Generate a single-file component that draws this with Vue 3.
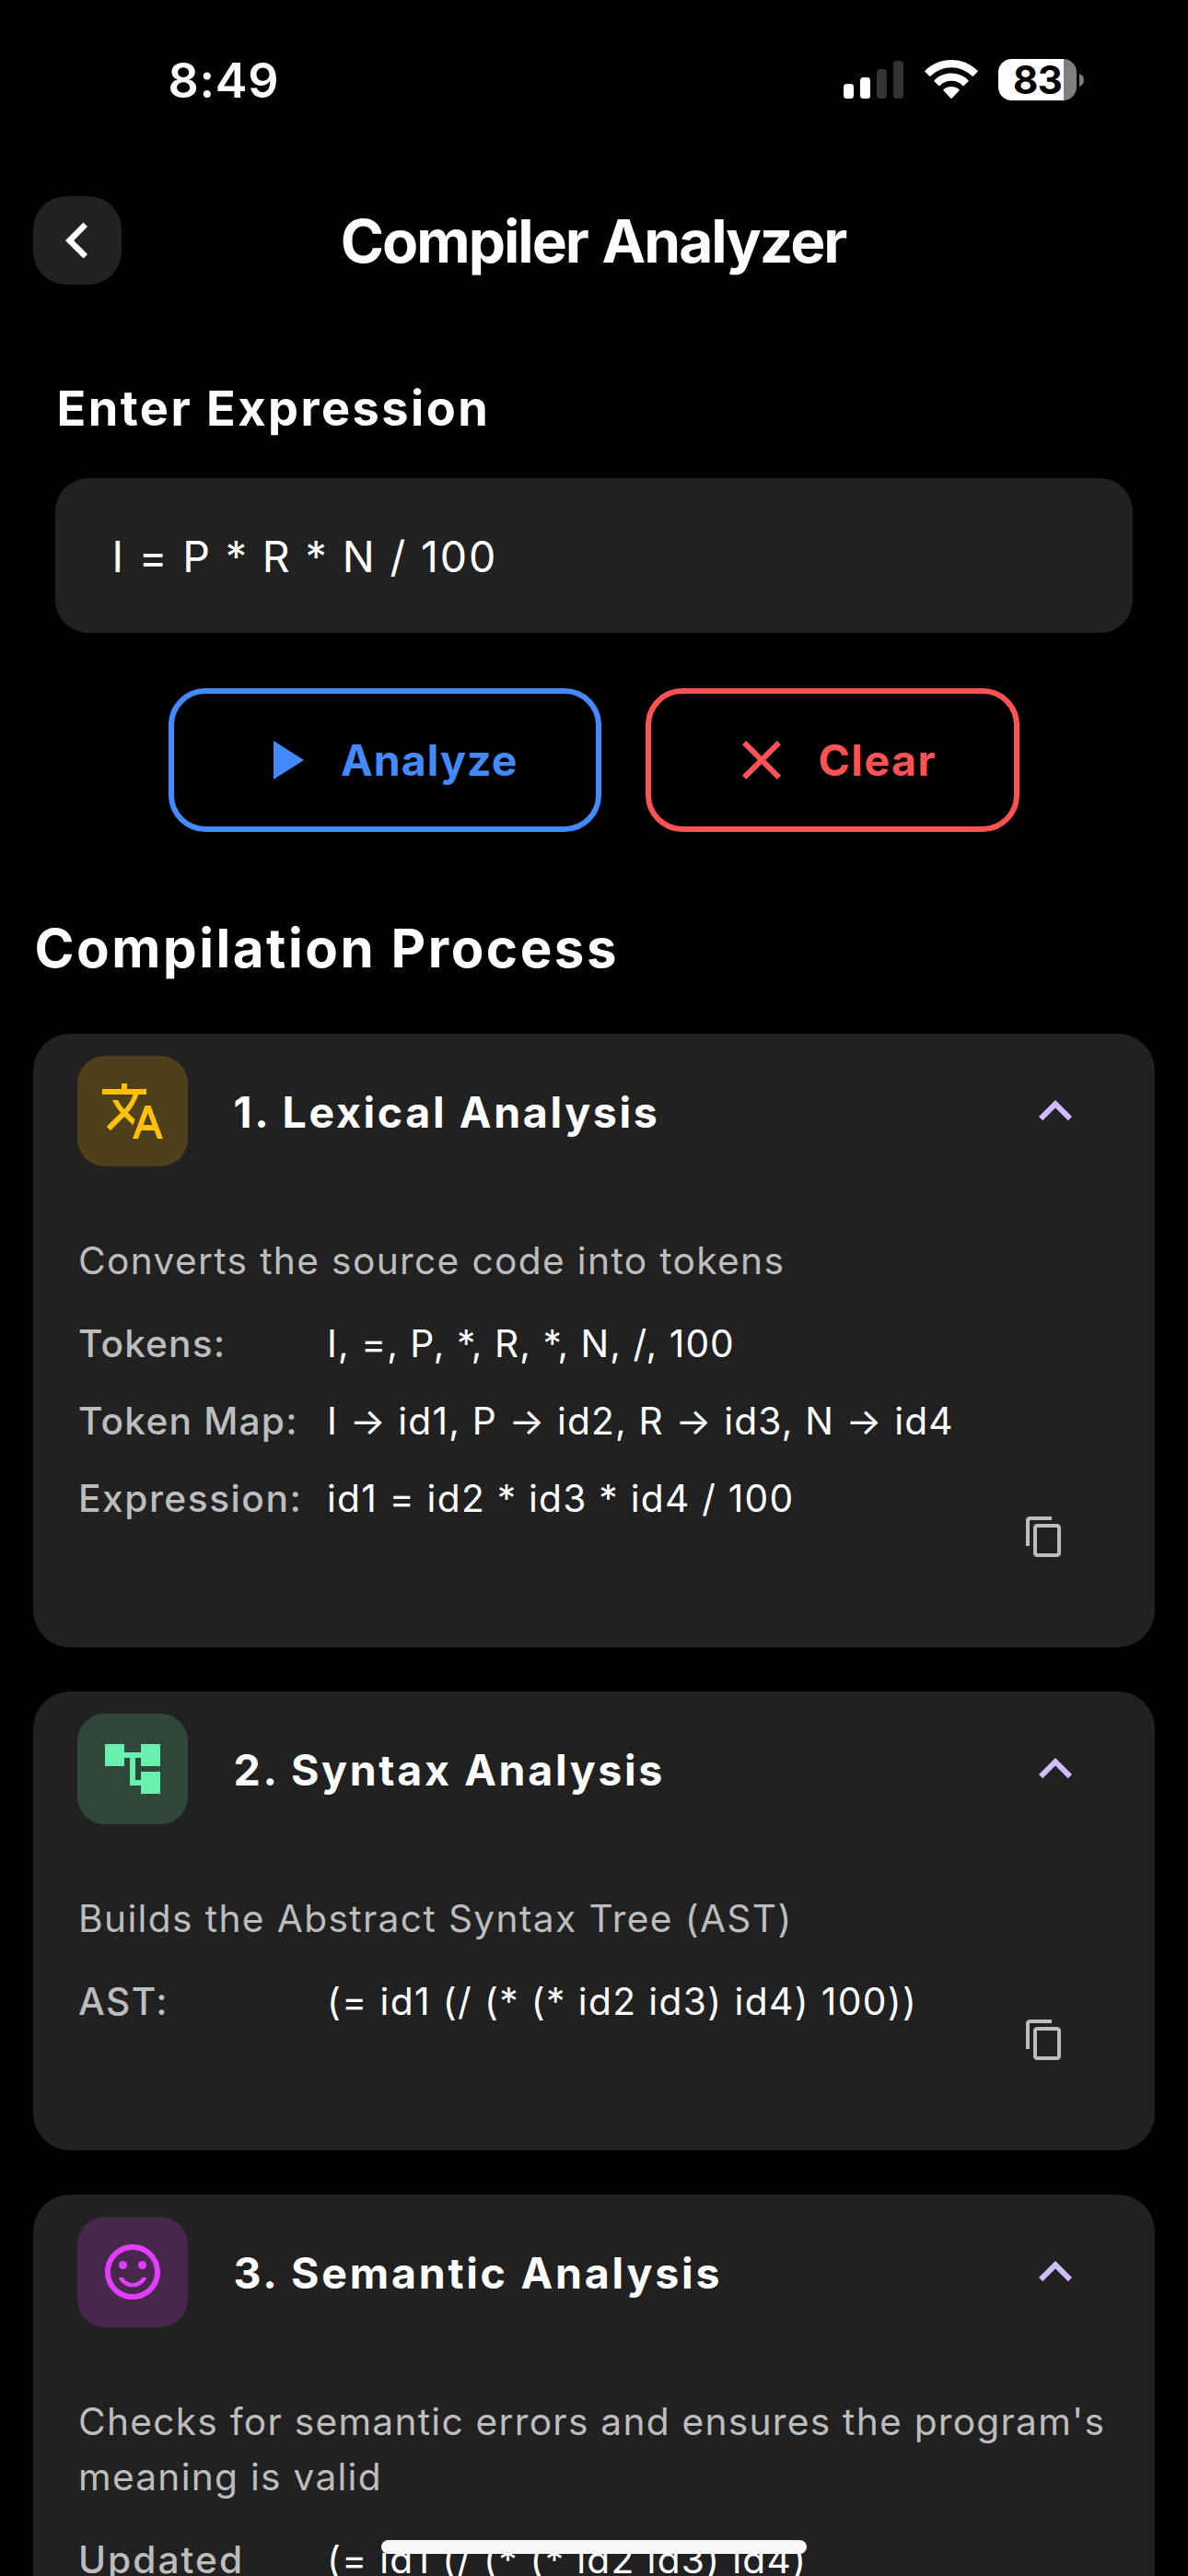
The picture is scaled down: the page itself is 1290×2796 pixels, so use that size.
<script setup>
import { ref } from 'vue'

const expression = ref('I = P * R * N / 100')

const phases = ref([
  {
    key: 'lexical',
    title: '1. Lexical Analysis',
    titleTracking: 2.65,
    description: 'Converts the source code into tokens',
    tracking: 1.34,
    rows: [
      { label: 'Tokens:', labelTracking: 1.1, value: 'I, =, P, *, R, *, N, /, 100', tracking: 1.03 },
      { label: 'Token Map:', labelTracking: 1.2, value: 'I → id1, P → id2, R → id3, N → id4', tracking: 1.17 },
      { label: 'Expression:', labelTracking: 1.51, value: 'id1 = id2 * id3 * id4 / 100', tracking: 1.25 },
    ],
  },
  {
    key: 'syntax',
    title: '2. Syntax Analysis',
    titleTracking: 2.67,
    description: 'Builds the Abstract Syntax Tree (AST)',
    tracking: 1.36,
    rows: [
      { label: 'AST:', labelTracking: 1.41, value: '(= id1 (/ (* (* id2 id3) id4) 100))', tracking: 1.4 },
    ],
  },
  {
    key: 'semantic',
    title: '3. Semantic Analysis',
    titleTracking: 2.78,
    description: "Checks for semantic errors and ensures the program's meaning is valid",
    tracking: 1.25,
    rows: [
      { label: 'Updated', labelTracking: 2, value: '(= id1 (/ (* (* id2 id3) id4)', tracking: 1.31 },
    ],
  },
])

const px = (n) => ({ letterSpacing: n + 'px' })
</script>

<template>
  <div class="screen">
    <div class="status">
      <span class="time">8:49</span>
      <div class="indicators">
        <svg class="cell" width="65" height="45" viewBox="0 0 65 45">
          <rect x="0" y="27" width="11" height="16" rx="3.5" fill="#fff" />
          <rect x="18" y="20" width="11" height="23" rx="3.5" fill="#fff" />
          <rect x="36" y="11" width="11" height="32" rx="3.5" fill="#333" />
          <rect x="54" y="2" width="11" height="41" rx="3.5" fill="#333" />
        </svg>
        <svg class="wifi" width="58" height="45" viewBox="0 0 58 45">
          <g fill="#fff">
            <path d="M29 1C17.900 1 7.900 5.400 0.700 12.500Q-0.100 13.300 0.700 14.100L5 18.400Q5.800 19.200 6.600 18.400A32 32 0 0 1 51.400 18.400Q52.200 19.200 53 18.400L57.300 14.100Q58.100 13.300 57.300 12.500C50.100 5.400 40.100 1 29 1Z" />
            <path d="M29 15.600C21.800 15.600 15.400 18.400 10.700 23Q9.900 23.800 10.700 24.600L15 28.800Q15.800 29.600 16.600 28.900A17.800 17.800 0 0 1 41.400 28.900Q42.200 29.600 43 28.800L47.300 24.600Q48.100 23.800 47.300 23C42.600 18.400 36.200 15.600 29 15.600Z" />
            <path d="M29 29.900C25.700 29.900 22.800 31.100 20.600 33Q19.800 33.800 20.600 34.600L28.200 42.400Q29 43.200 29.800 42.400L37.400 34.600Q38.200 33.800 37.400 33C35.200 31.100 32.300 29.900 29 29.900Z" />
          </g>
        </svg>
        <div class="battery">
          <div class="battery-body"><span class="level">83</span></div>
          <svg width="5" height="14" viewBox="0 0 5 14"><path d="M0 0Q5 2 5 7T0 14Z" fill="#808080" /></svg>
        </div>
      </div>
    </div>

    <header class="topbar">
      <button class="back" aria-label="Back">
        <svg width="96" height="96" viewBox="0 0 96 96"><path d="M35 48 54.500 28.600 59 33.100 44.100 48 59 62.900 54.500 67.400Z" fill="#fff" /></svg>
      </button>
      <h1>Compiler Analyzer</h1>
    </header>

    <h2 class="label">Enter Expression</h2>
    <div class="field"><span>{{ expression }}</span></div>

    <div class="actions">
      <button class="action analyze">
        <svg width="72" height="72" viewBox="0 0 24 24"><path d="M8 5v14l11-7z" /></svg>
        <span>Analyze</span>
      </button>
      <button class="action clear">
        <svg width="72" height="72" viewBox="0 0 24 24"><path d="M19 6.410 17.590 5 12 10.590 6.410 5 5 6.410 10.590 12 5 17.590 6.410 19 12 13.410 17.590 19 19 17.590 13.410 12z" /></svg>
        <span>Clear</span>
      </button>
    </div>

    <h2 class="section">Compilation Process</h2>

    <div class="cards">
      <section v-for="p in phases" :key="p.key" class="card">
        <div class="card-head">
          <div class="tile" :class="p.key">
            <svg width="72" height="72" viewBox="0 0 24 24">
              <path v-if="p.key === 'lexical'" d="M12.870 15.070l-2.540-2.510.03-.03c1.740-1.940 2.980-4.170 3.710-6.530H17V4h-7V2H8v2H1v1.990h11.170C11.500 7.920 10.440 9.750 9 11.350 8.070 10.320 7.300 9.190 6.690 8h-2c.73 1.630 1.730 3.170 2.980 4.560l-5.090 5.020L4 19l5-5 3.110 3.110.76-2.040zM18.500 10h-2L12 22h2l1.120-3h4.750L21 22h2l-4.500-12zm-2.620 7l1.620-4.330L19.120 17h-3.240z" />
              <path v-else-if="p.key === 'syntax'" d="M22 11V3h-7v3H9V3H2v8h7V8h2v10h4v3h7v-8h-7v3h-2V8h2v3z" />
              <g v-else>
                <circle cx="15.500" cy="9.500" r="1.500" />
                <circle cx="8.500" cy="9.500" r="1.500" />
                <path d="M11.990 2C6.470 2 2 6.480 2 12s4.470 10 9.990 10C17.520 22 22 17.520 22 12S17.520 2 11.990 2zM12 20c-4.420 0-8-3.580-8-8s3.580-8 8-8 8 3.580 8 8-3.580 8-8 8zm0-4c-1.480 0-2.750-.81-3.450-2H6.880c.8 2.050 2.790 3.500 5.120 3.500s4.320-1.450 5.120-3.500h-1.670c-.7 1.190-1.970 2-3.450 2z" />
              </g>
            </svg>
          </div>
          <h3 :style="px(p.titleTracking)">{{ p.title }}</h3>
          <svg class="chevron" width="72" height="72" viewBox="0 0 24 24"><path d="M12 8l-6 6 1.410 1.410L12 10.830l4.590 4.580L18 14z" /></svg>
        </div>
        <p class="desc" :style="px(p.tracking)">{{ p.description }}</p>
        <dl>
          <div v-for="r in p.rows" :key="r.label" class="row">
            <dt :style="px(r.labelTracking)">{{ r.label }}</dt>
            <dd :style="px(r.tracking)">{{ r.value }}</dd>
          </div>
        </dl>
        <button class="copy" aria-label="Copy">
          <svg width="48" height="48" viewBox="0 0 24 24"><path d="M16 1H4c-1.100 0-2 .9-2 2v14h2V3h12V1zm3 4H8c-1.100 0-2 .9-2 2v14c0 1.100.9 2 2 2h11c1.100 0 2-.9 2-2V7c0-1.100-.9-2-2-2zm0 16H8V7h11v14z" /></svg>
        </button>
      </section>
    </div>

    <div class="home-indicator"></div>
  </div>
</template>

<style>
body {
  background: #000;
}
</style>

<style scoped>
.screen {
  position: relative;
  box-sizing: border-box;
  width: 1290px;
  height: 2796px;
  overflow: hidden;
  background: #000;
  color: #fff;
  font-family: Inter, "Liberation Sans", sans-serif;
}
h1, h2, h3, p, dl, dt, dd {
  margin: 0;
}
button {
  margin: 0;
  padding: 0;
  border: 0;
  background: none;
  color: inherit;
  font-family: inherit;
}
svg {
  display: block;
  flex: none;
}

.status {
  box-sizing: border-box;
  display: flex;
  align-items: center;
  justify-content: space-between;
  height: 173px;
  padding: 0 113px 0 182.500px;
}
.time {
  padding-top: 2px;
  font-size: 52px;
  font-weight: 600;
  line-height: 60px;
  letter-spacing: 0.72px;
}
.indicators {
  display: flex;
  align-items: center;
}
.wifi {
  margin-left: 22.500px;
}
.battery {
  display: flex;
  align-items: center;
  gap: 3px;
  margin-left: 22.500px;
}
.battery-body {
  display: flex;
  box-sizing: border-box;
  width: 85px;
  height: 45px;
  padding-left: 16px;
  border-radius: 14.500px;
  background: linear-gradient(90deg, #fff 71px, #808080 71px);
}
.level {
  color: #000;
  font-size: 42px;
  font-weight: 700;
  line-height: 45px;
  letter-spacing: -0.7px;
}

.topbar {
  position: relative;
  display: flex;
  align-items: center;
  height: 96px;
  margin-top: 40px;
  padding: 0 36px;
}
.back {
  flex: none;
  width: 96px;
  height: 96px;
  border-radius: 36px;
  background: #212121;
}
h1 {
  flex: 1;
  padding: 2px 98px 0 0;
  font-size: 64px;
  font-weight: 700;
  line-height: 80px;
  letter-spacing: -2px;
  word-spacing: 2.5px;
  text-align: center;
}

.label {
  margin: 104px 0 0 61.500px;
  font-size: 52.300px;
  font-weight: 700;
  line-height: 60px;
  letter-spacing: 2.46px;
}
.field {
  display: flex;
  align-items: center;
  box-sizing: border-box;
  height: 168px;
  margin: 46px 60px 0;
  padding: 2px 61.500px 0;
  border-radius: 36px;
  background: #212121;
  font-size: 46.500px;
  letter-spacing: 1.85px;
}

.actions {
  display: flex;
  justify-content: center;
  gap: 48px;
  margin-top: 60px;
}
.action {
  display: flex;
  align-items: center;
  box-sizing: border-box;
  height: 156px;
  padding-left: 84px;
  border: 6px solid currentColor;
  border-radius: 40px;
  font-size: 46.500px;
  font-weight: 700;
}
.action svg {
  fill: currentColor;
}
.analyze {
  width: 470px;
  gap: 25px;
  color: #448aff;
  letter-spacing: 1.07px;
}
.clear {
  width: 406px;
  gap: 25.500px;
  color: #ff5252;
  letter-spacing: 1.46px;
}

.section {
  margin: 90px 0 57px 37.500px;
  font-size: 58.200px;
  font-weight: 700;
  line-height: 72px;
  letter-spacing: 2.54px;
}

.cards {
  display: flex;
  flex-direction: column;
  gap: 48px;
  padding: 0 36px;
}
.card {
  position: relative;
  padding-bottom: 131px;
  border-radius: 40px;
  background: #212121;
}
.card-head {
  display: flex;
  align-items: center;
  padding: 24px 72px 24px 48px;
}
.tile {
  display: grid;
  flex: none;
  place-items: center;
  width: 120px;
  height: 120px;
  border-radius: 30px;
}
.tile svg {
  fill: currentColor;
}
.lexical {
  background: #4d401a;
  color: #ffc107;
}
.syntax {
  background: #2f483b;
  color: #69f0ae;
}
.semantic {
  background: #48274c;
  color: #e040fb;
}
h3 {
  flex: 1;
  padding-top: 2px;
  margin-left: 49.500px;
  font-size: 46.500px;
  font-weight: 700;
  line-height: 60px;
}
.chevron {
  fill: #d0bcff;
}
.desc {
  margin: 49px 24px 30px 49px;
  color: #bdbdbd;
  font-size: 40.700px;
  line-height: 60px;
}
dl {
  display: flex;
  flex-direction: column;
  gap: 24px;
  margin: 0 48px 0 49px;
}
.row {
  display: flex;
  font-size: 40.700px;
  line-height: 60px;
}
dt {
  flex: none;
  width: 270px;
  color: #bdbdbd;
  font-weight: 500;
}
dd {
  white-space: nowrap;
}
.copy {
  position: absolute;
  right: 96px;
  bottom: 96px;
}
.copy svg {
  fill: #bdbdbd;
}

.home-indicator {
  position: absolute;
  left: 414px;
  bottom: 24px;
  width: 462px;
  height: 15px;
  border-radius: 8px;
  background: #f7f7f7;
}
</style>
